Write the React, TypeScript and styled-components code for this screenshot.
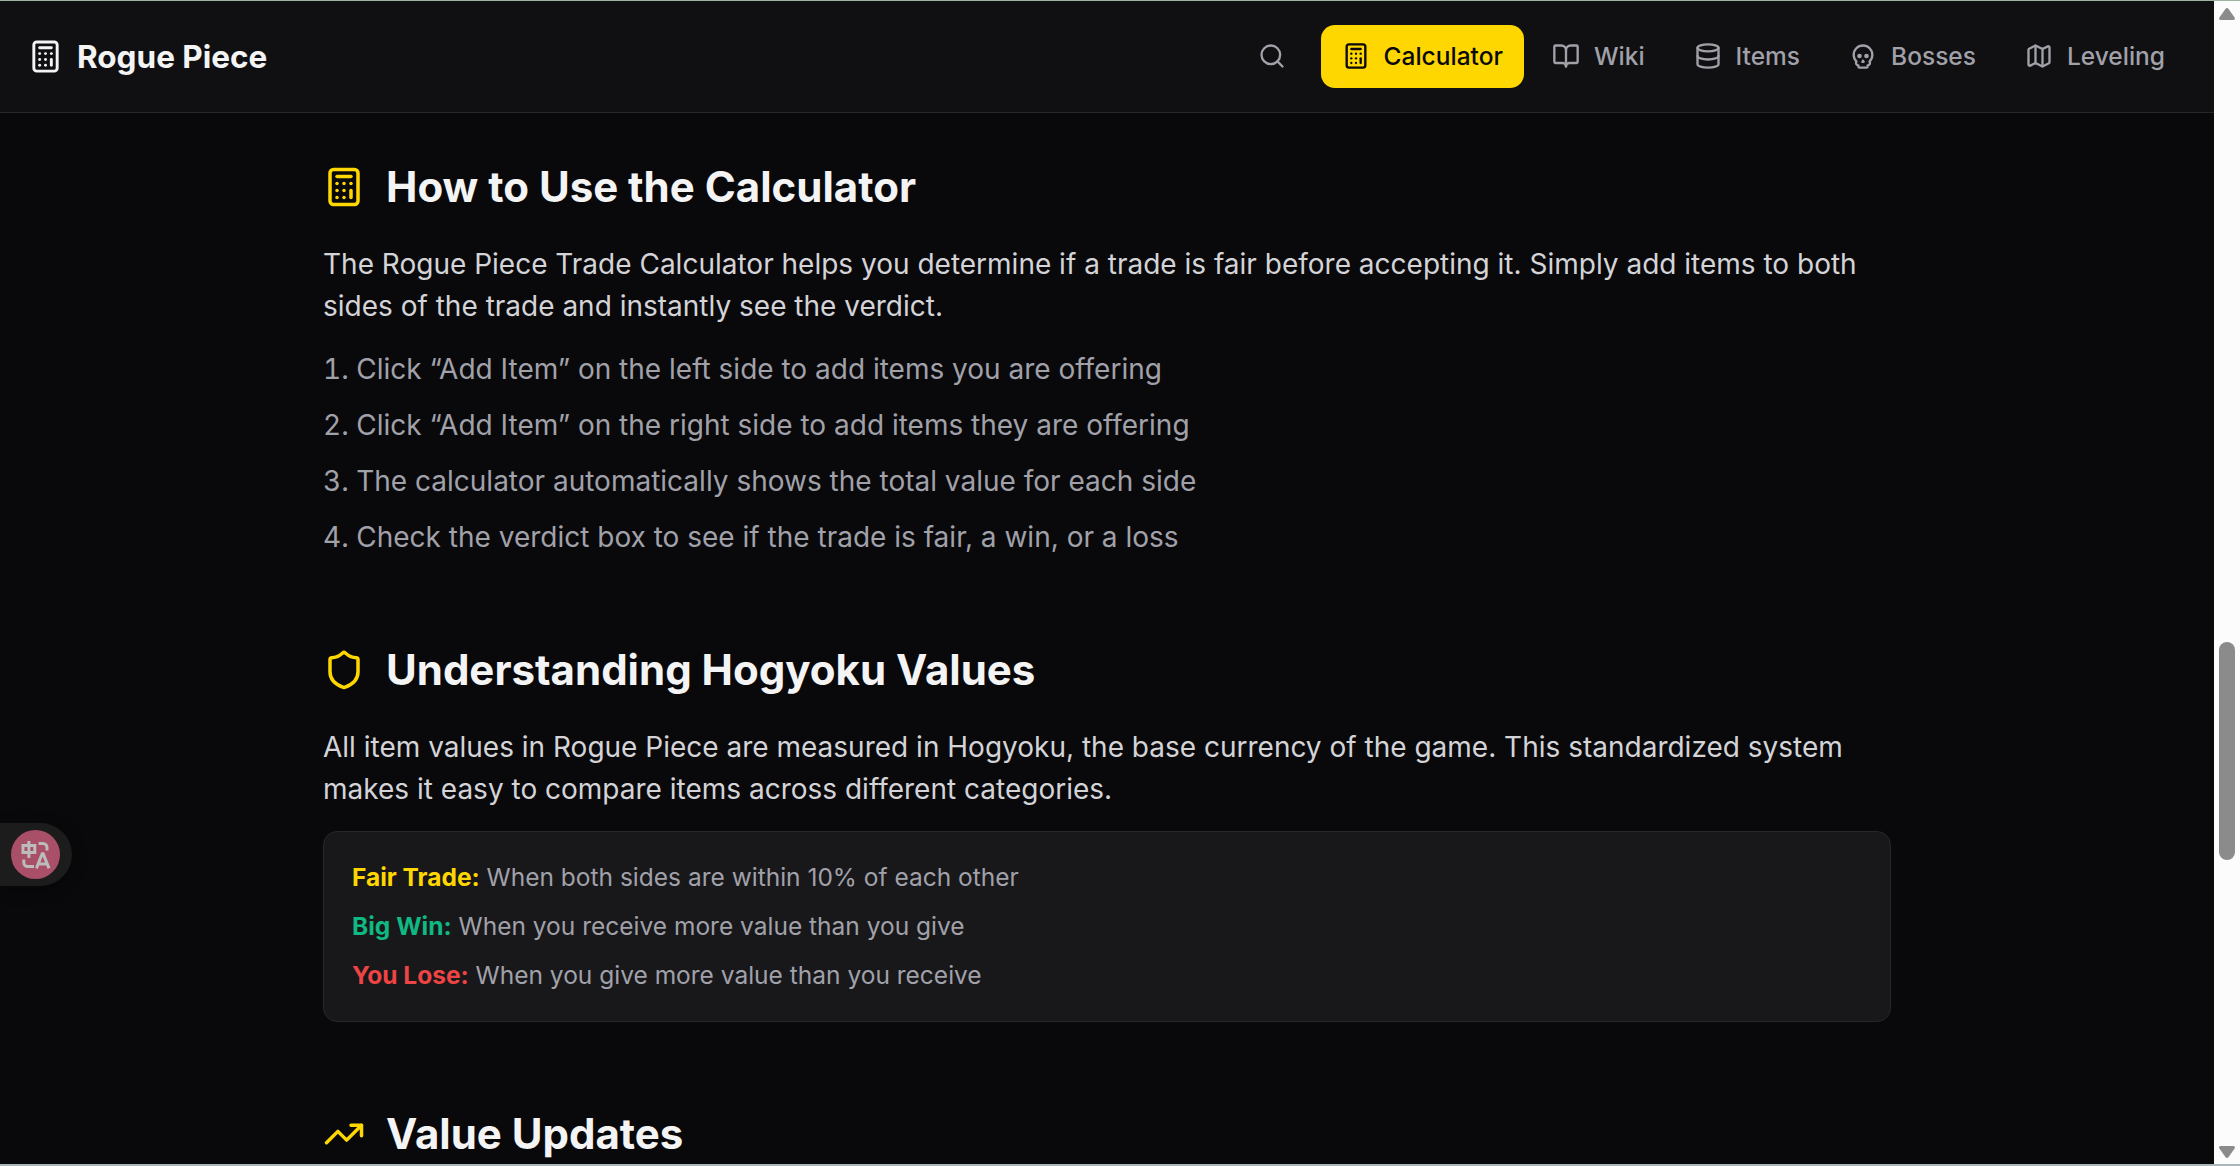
import React from 'react';
import styled, { createGlobalStyle } from 'styled-components';
import {
    BookOpen,
    Calculator,
    Database,
    Map as MapIcon,
    Search,
    Shield,
    Skull,
    TrendingUp,
    type LucideIcon
} from 'lucide-react';

const GlobalStyle = createGlobalStyle`
  * {
    box-sizing: border-box;
  }

  body {
    margin: 0;
    padding: 0;
    overflow: hidden;
    background-color: #09090b;
    font-family: Inter, "Liberation Sans", sans-serif;
  }
`;

const Window = styled.div`
  height: 1166px;
  display: flex;
  flex-direction: column;
  border-top: 1px solid #9db3a0;
  border-bottom: 2px solid #aab8bc;
  overflow: hidden;
`;

const Viewport = styled.div`
  flex: 1;
  min-height: 0;
  display: flex;
`;

const Page = styled.div`
  flex: 1;
  min-width: 0;
  overflow: hidden;
  background-color: #09090b;
  color: #f4f4f5;
`;

const Header = styled.header`
  height: 112px;
  display: flex;
  justify-content: space-between;
  align-items: center;
  padding: 0 28px;
  background-color: #101012;
  border-bottom: 1px solid #27272a;
`;

const Logo = styled.div`
  display: flex;
  align-items: center;
  gap: 14px;
  font-size: 31.5px;
  font-weight: 700;
  line-height: 49px;
`;

const NavLinks = styled.nav`
  display: flex;
  align-items: center;
  gap: 7px;

  svg {
    margin-bottom: 1px;
  }
`;

const SearchButton = styled.button`
  width: 63px;
  height: 63px;
  display: flex;
  justify-content: center;
  align-items: center;
  margin-right: 10px;
  padding: 0;
  border: none;
  background: none;
  color: #a1a1aa;
  cursor: pointer;
`;

const NavLink = styled.a<{ $active?: boolean }>`
  height: 63px;
  display: flex;
  align-items: center;
  gap: 14px;
  padding: 0 21px;
  border-radius: 14px;
  font-size: 24.5px;
  font-weight: 500;
  line-height: 35px;
  color: ${props => (props.$active ? '#09090b' : '#a1a1aa')};
  background-color: ${props => (props.$active ? '#ffd700' : 'transparent')};
  cursor: pointer;
`;

const Content = styled.main`
  width: 1568px;
  display: flex;
  flex-direction: column;
  gap: 84px;
  margin: 0 auto;
  padding-top: 46px;
`;

const Section = styled.section`
  display: flex;
  flex-direction: column;
`;

const SectionTitle = styled.h2`
  display: flex;
  align-items: center;
  gap: 21px;
  margin: 0 0 28px;
  font-size: 42px;
  font-weight: 700;
  line-height: 56px;

  svg {
    color: #ffd700;
  }
`;

const Text = styled.p`
  margin: 0 0 21px;
  font-size: 28px;
  line-height: 42px;
  color: #d4d4d8;
`;

const Steps = styled.ol`
  display: flex;
  flex-direction: column;
  gap: 14px;
  margin: 0;
  padding: 0;
  list-style: decimal inside;
  font-size: 28px;
  line-height: 42px;
  color: #a1a1aa;
`;

const Card = styled.div`
  display: flex;
  flex-direction: column;
  gap: 14px;
  padding: 28px;
  border: 1px solid #27272a;
  border-radius: 14px;
  background-color: #18181b;
`;

const Verdict = styled.p`
  margin: 0;
  font-size: 24.5px;
  line-height: 35px;
  color: #a1a1aa;
`;

const VerdictName = styled.strong<{ $color: string }>`
  font-weight: 700;
  color: ${props => props.$color};
`;

const Scrollbar = styled.div`
  width: 26px;
  display: flex;
  flex-direction: column;
  align-items: center;
  padding: 7px 0 6px;
  background-color: #fcfcfc;
`;

const Thumb = styled.div`
  width: 16px;
  height: 218px;
  margin: 622px 0 auto;
  border-radius: 8px;
  background-color: #8b8b8b;
`;

const TranslateTab = styled.div`
  position: fixed;
  left: 0;
  top: 823px;
  width: 72px;
  height: 63px;
  display: flex;
  align-items: center;
  padding-left: 11px;
  border-radius: 0 32px 32px 0;
  background-color: #1c1c1c;
  box-shadow: 0 4px 16px rgba(0, 0, 0, 0.3);
`;

const TranslateBadge = styled.div`
  width: 49px;
  height: 49px;
  display: flex;
  justify-content: center;
  align-items: center;
  border-radius: 50%;
  background-color: #a94f67;
`;

interface NavItem {
    label: string;
    icon: LucideIcon;
    active?: boolean;
}

const navItems: NavItem[] = [
    { label: 'Calculator', icon: Calculator, active: true },
    { label: 'Wiki', icon: BookOpen },
    { label: 'Items', icon: Database },
    { label: 'Bosses', icon: Skull },
    { label: 'Leveling', icon: MapIcon }
];

const steps = [
    'Click “Add Item” on the left side to add items you are offering',
    'Click “Add Item” on the right side to add items they are offering',
    'The calculator automatically shows the total value for each side',
    'Check the verdict box to see if the trade is fair, a win, or a loss'
];

const verdicts = [
    { name: 'Fair Trade:', color: '#ffd700', text: 'When both sides are within 10% of each other' },
    { name: 'Big Win:', color: '#10b981', text: 'When you receive more value than you give' },
    { name: 'You Lose:', color: '#ef4444', text: 'When you give more value than you receive' }
];

const TranslateIcon = () => (
    <svg width="30" height="30" viewBox="0 0 30 30" fill="none" stroke="#bcbcbc" strokeWidth="3">
        <path d="M2 5.4h11.8v7H2zM7.9 1v17" />
        <path d="M17.6 3.4H22a4 4 0 0 1 4 4v3M2.8 19.5v3a4 4 0 0 0 4 4H13" />
        <path d="M15.4 28.4l5.8-14.6h1l5.8 14.6M18 24h8" />
    </svg>
);

const App: React.FC = () => {
    return (
        <>
            <GlobalStyle />
            <Window>
                <Viewport>
                    <Page>
                        <Header>
                            <Logo>
                                <Calculator size={35} />
                                Rogue Piece
                            </Logo>
                            <NavLinks>
                                <SearchButton aria-label="Search">
                                    <Search size={28} />
                                </SearchButton>
                                {navItems.map(({ label, icon: Icon, active }) => (
                                    <NavLink key={label} $active={active}>
                                        <Icon size={28} />
                                        {label}
                                    </NavLink>
                                ))}
                            </NavLinks>
                        </Header>

                        <Content>
                            <Section>
                                <SectionTitle>
                                    <Calculator size={42} />
                                    How to Use the Calculator
                                </SectionTitle>
                                <Text>
                                    The Rogue Piece Trade Calculator helps you determine if a trade is fair before
                                    accepting it. Simply add items to both sides of the trade and instantly see the
                                    verdict.
                                </Text>
                                <Steps>
                                    {steps.map(step => (
                                        <li key={step}>{step}</li>
                                    ))}
                                </Steps>
                            </Section>

                            <Section>
                                <SectionTitle>
                                    <Shield size={42} />
                                    Understanding Hogyoku Values
                                </SectionTitle>
                                <Text>
                                    All item values in Rogue Piece are measured in Hogyoku, the base currency of the
                                    game. This standardized system makes it easy to compare items across different
                                    categories.
                                </Text>
                                <Card>
                                    {verdicts.map(verdict => (
                                        <Verdict key={verdict.name}>
                                            <VerdictName $color={verdict.color}>{verdict.name}</VerdictName>{' '}
                                            {verdict.text}
                                        </Verdict>
                                    ))}
                                </Card>
                            </Section>

                            <Section>
                                <SectionTitle>
                                    <TrendingUp size={42} />
                                    Value Updates
                                </SectionTitle>
                            </Section>
                        </Content>
                    </Page>

                    <Scrollbar>
                        <svg width="16" height="12" viewBox="0 0 16 12" fill="#8b8b8b">
                            <path d="M6.4 1Q8-.8 9.6 1l6 8.6Q16.6 12 14.4 12H1.6Q-.6 12 .4 9.6z" />
                        </svg>
                        <Thumb />
                        <svg width="16" height="12" viewBox="0 0 16 12" fill="#8b8b8b">
                            <path d="M6.4 11Q8 12.8 9.6 11l6-8.6Q16.6 0 14.4 0H1.6Q-.6 0 .4 2.4z" />
                        </svg>
                    </Scrollbar>
                </Viewport>
            </Window>
            <TranslateTab>
                <TranslateBadge>
                    <TranslateIcon />
                </TranslateBadge>
            </TranslateTab>
        </>
    );
};

export default App;
